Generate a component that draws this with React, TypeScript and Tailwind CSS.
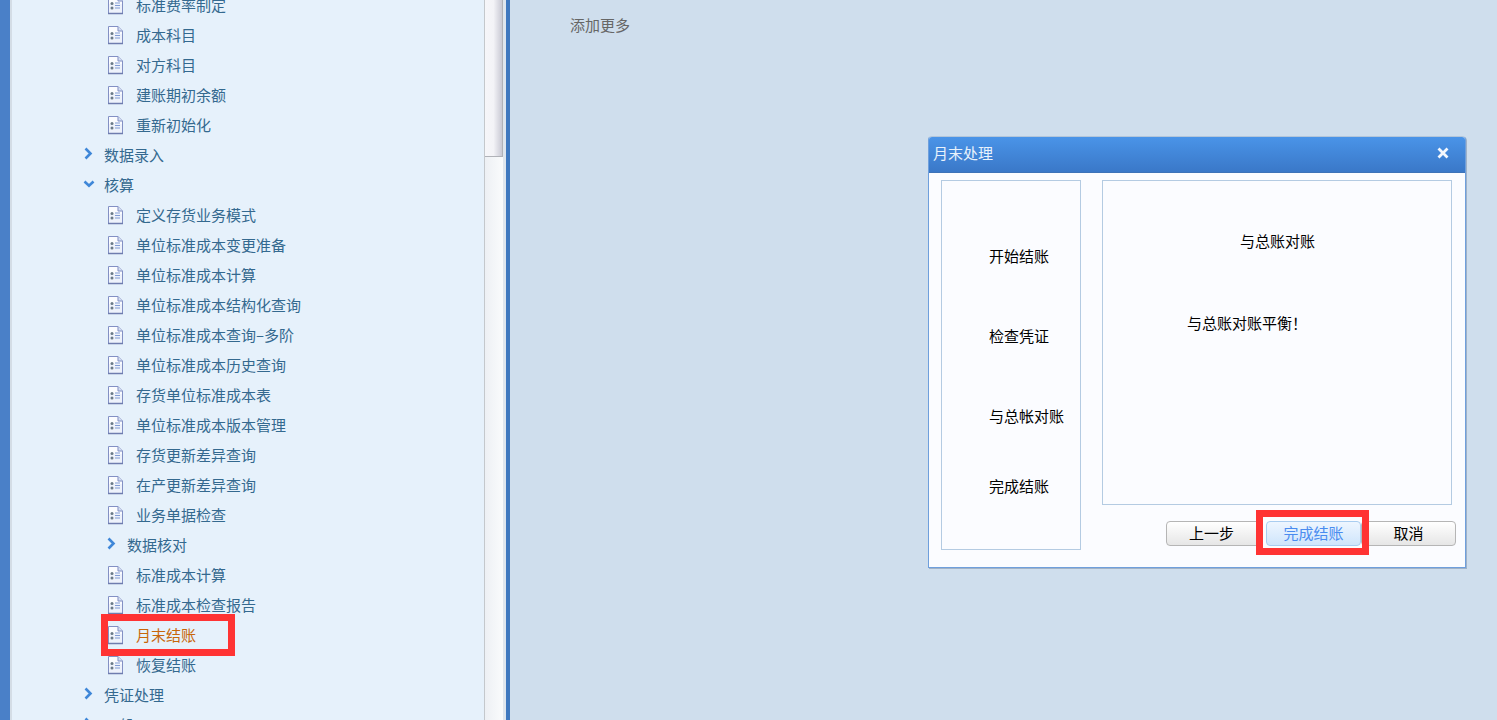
import React from "react";

const DocIcon = () => (
  <svg width="17" height="20" viewBox="0 0 17 20" className="shrink-0">
    <path d="M1.5 1.5H11L15.5 6V18.5H1.5Z" fill="#eef2fb" stroke="#8390c4" />
    <path d="M2 2H10.5V6.5H15V9H2Z" fill="#fbfcff" />
    <path d="M11 1.5V6H15.5" fill="#d5def2" stroke="#8390c4" />
    <path d="M1 18.5H16" stroke="#6f7cae" strokeWidth="1.5" />
    <circle cx="5" cy="8.5" r="1.5" fill="#6a7a88" />
    <circle cx="5" cy="13" r="1.5" fill="#6a7a88" />
    <path d="M8 8H13M8 10.5H13M8 13H13" stroke="#7f9ad4" />
  </svg>
);

const Chevron = ({ open }: { open?: boolean }) =>
  open ? (
    <svg width="12" height="8" viewBox="0 0 12 8" className="shrink-0 -mt-[3px]">
      <path d="M1.5 1.5L6 5.8L10.5 1.5" fill="none" stroke="#3f87d8" strokeWidth="2.6" />
    </svg>
  ) : (
    <svg width="9" height="13" viewBox="0 0 9 13" className="shrink-0 -mt-[3px]">
      <path d="M1.5 1.5L6.5 6.5L1.5 11.5" fill="none" stroke="#3f87d8" strokeWidth="2.6" />
    </svg>
  );

const Leaf = ({ label, active }: { label: string; active?: boolean }) => (
  <div className="h-[30px] flex items-center pl-[95px]">
    <DocIcon />
    <span className={`ml-[12px] ${active ? "text-[#c8660a]" : "text-[#34698f]"}`}>{label}</span>
  </div>
);

const Group = ({ label, open }: { label: string; open?: boolean }) => (
  <div className="h-[30px] flex items-center">
    <div className={`flex justify-start w-[92px] ${open ? "pl-[71px]" : "pl-[72px]"}`}>
      <Chevron open={open} />
    </div>
    <span className="text-[#34698f]">{label}</span>
  </div>
);

const topLeaves = ["标准费率制定", "成本科目", "对方科目", "建账期初余额", "重新初始化"];
const midLeaves = [
  "定义存货业务模式",
  "单位标准成本变更准备",
  "单位标准成本计算",
  "单位标准成本结构化查询",
  "单位标准成本查询–多阶",
  "单位标准成本历史查询",
  "存货单位标准成本表",
  "单位标准成本版本管理",
  "存货更新差异查询",
  "在产更新差异查询",
  "业务单据检查",
];

const Sidebar = () => (
  <div className="w-[472px] h-full bg-[#e6f1fb] overflow-hidden">
    <div className="-mt-[10px]">
      {topLeaves.map((l) => (
        <Leaf key={l} label={l} />
      ))}
      <Group label="数据录入" />
      <Group label="核算" open />
      {midLeaves.map((l) => (
        <Leaf key={l} label={l} />
      ))}
      <div className="h-[30px] flex items-center pl-[95px]">
        <Chevron />
        <span className="ml-[11px] text-[#34698f]">数据核对</span>
      </div>
      <Leaf label="标准成本计算" />
      <Leaf label="标准成本检查报告" />
      <Leaf label="月末结账" active />
      <Leaf label="恢复结账" />
      <Group label="凭证处理" />
      <Group label="一般" />
    </div>
  </div>
);

const Scrollbar = () => (
  <div className="w-[19px] h-full bg-gradient-to-r from-[#edf0f4] to-[#fafbfc] border-l border-[#c4c8cc]">
    <div className="h-[157px] bg-gradient-to-r from-[#f6f6f9] via-[#f3f3f7] to-[#c9c9d4] border-r border-b border-[#b0b2b8]" />
  </div>
);

const Step = ({ label, className }: { label: string; className: string }) => (
  <div className={`pl-[47px] text-black ${className}`}>{label}</div>
);

const Dialog = () => (
  <div className="absolute left-[928px] top-[136px] w-[538px] h-[432px] flex flex-col bg-[#fbfcff] border border-[#6f9fdc] border-t-[#b4c6da] rounded-t-[4px] shadow-[1px_1px_0_#9fb2c8]">
    <div className="h-[36px] shrink-0 flex items-center justify-between pl-[4px] pr-[16px] pb-[3px] rounded-t-[3px] bg-gradient-to-b from-[#4a94e8] to-[#3a78c8] text-[#e8f2fc] border-b border-[#3d73b8]">
      <span>月末处理</span>
      <svg width="12" height="12" viewBox="0 0 12 12">
        <path d="M1.5 1.5L10.5 10.5M10.5 1.5L1.5 10.5" stroke="#f4f8fd" strokeWidth="2.8" />
      </svg>
    </div>
    <div className="flex-1 flex pl-[12px] pt-[7px] gap-[21px]">
      <div className="w-[140px] h-[370px] border border-[#b4cbe2] text-[15px]">
        <Step label="开始结账" className="mt-[64px]" />
        <Step label="检查凭证" className="mt-[57px]" />
        <Step label="与总帐对账" className="mt-[58px]" />
        <Step label="完成结账" className="mt-[47px]" />
      </div>
      <div className="w-[350px]">
        <div className="h-[325px] border border-[#b4cbe2] text-black">
          <div className="pt-[49px] pl-[137px]">与总账对账</div>
          <div className="pt-[59px] pl-[84px]">与总账对账平衡！</div>
        </div>
        <div className="flex justify-end mt-[16px] -mr-[4px]">
          <button className="w-[96px] h-[25px] pr-[5px] rounded-[4px] border border-[#b5b5b5] bg-gradient-to-b from-[#ffffff] to-[#e6e6e6] text-black">
            上一步
          </button>
          <button className="w-[95px] h-[25px] ml-[4px] rounded-[4px] border border-[#a9cdf0] bg-gradient-to-b from-[#eef6ff] to-[#cfe5fb] text-[#4a8cf0]">
            完成结账
          </button>
          <button className="w-[95px] h-[25px] rounded-[4px] border border-[#b5b5b5] bg-gradient-to-b from-[#ffffff] to-[#e6e6e6] text-black">
            取消
          </button>
        </div>
      </div>
    </div>
  </div>
);

export default function App() {
  return (
    <div
      className="relative w-[1497px] h-[720px] overflow-hidden flex bg-[#cfdeed] text-[15px]"
      style={{ fontFamily: '"Noto Sans CJK SC", "Liberation Sans", sans-serif' }}
    >
      <div className="w-[10px] h-full shrink-0 bg-[#4a80c8]" />
      <div className="w-[2px] h-full shrink-0 bg-[#d4dde6]" />
      <Sidebar />
      <Scrollbar />
      <div className="w-[3px] h-full shrink-0 bg-[#dfe6ee]" />
      <div className="w-[4px] h-full shrink-0 bg-[#3f78bf]" />
      <div className="flex-1 pl-[60px] pt-[14px] text-[#666666]">添加更多</div>
      <Dialog />
      {/* red marks on the screenshot */}
      <div className="absolute left-[101px] top-[614px] w-[134px] h-[42px] border-[7px] border-[#ff3333]" />
      <div className="absolute left-[1256px] top-[510px] w-[113px] h-[45px] border-[7px] border-[#ff3333]" />
    </div>
  );
}
